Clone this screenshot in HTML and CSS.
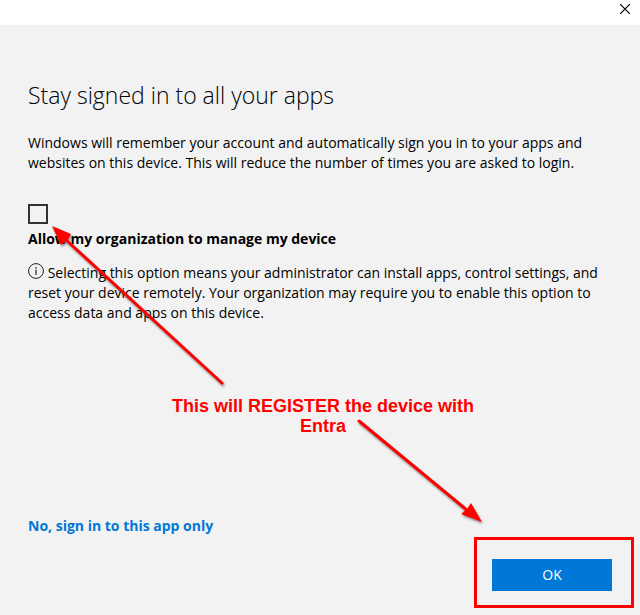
FILE: index.html
```html
<!DOCTYPE html>
<html lang="en">
<head>
    <meta charset="UTF-8">
    <meta name="viewport" content="width=device-width, initial-scale=1.0">
    <title>Stay signed in to all your apps</title>
    <link rel="stylesheet" href="styles.css">
</head>
<body>

<header class="titlebar">
    <button type="button" class="close" aria-label="Close">
        <svg width="10" height="10" viewBox="0 0 10 10">
            <path d="M0 0 L10 10 M10 0 L0 10" stroke="#000" stroke-width="1.2"/>
        </svg>
    </button>
</header>

<main class="dialog">
    <h1>Stay signed in to all your apps</h1>
    <p class="intro">Windows will remember your account and automatically sign you in to your apps and websites on this device. This will reduce the number of times you are asked to login.</p>

    <div class="option">
        <input type="checkbox" id="manage" name="manage">
        <label for="manage">Allow my organization to manage my device</label>
    </div>

    <p class="info">
        <svg class="info-icon" width="16" height="16" viewBox="0 0 16 16">
            <circle cx="8" cy="8" r="7.4" fill="none" stroke="#222" stroke-width="1"/>
            <path d="M8 4 V5.5 M8 6.5 V12" stroke="#222" stroke-width="1.2"/>
        </svg>
        Selecting this option means your administrator can install apps, control settings, and reset your device remotely. Your organization may require you to enable this option to access data and apps on this device.
    </p>

    <p class="note">This will REGISTER the device with Entra</p>

    <div class="actions">
        <a href="#" class="skip">No, sign in to this app only</a>
        <div class="highlight">
            <button type="button" class="ok">OK</button>
        </div>
    </div>
</main>

<!-- Arrows over the dialog -->
<svg class="arrows" width="640" height="615" viewBox="0 0 640 615">
    <g stroke="#f00" stroke-width="3" fill="#f00">
        <path d="M223 384 L64 238"/>
        <path d="M359 421 L468 511" stroke-linecap="round"/>
        <path d="M52 226 L71 234 L68 240 L61 245 Z" stroke="none"/>
        <path d="M482 522 L471 503 L467 509 L461 514 Z" stroke="none"/>
    </g>
</svg>

</body>
</html>
```

FILE: styles.css
```css
* {
    box-sizing: border-box;
}
body {
    display: flex;
    flex-direction: column;
    position: relative;
    min-height: 100vh;
    margin: 0;
    background-color: #f2f2f2;
    color: #000;
    font-family: "Segoe UI", "Open Sans", sans-serif;
    font-size: 14px;
    line-height: 20px;
}
.titlebar {
    display: flex;
    justify-content: flex-end;
    height: 25px;
    background-color: #fff;
}
.close {
    display: flex;
    align-items: flex-start;
    padding: 4px 10px;
    border: none;
    background: none;
}
.dialog {
    display: flex;
    flex: 1;
    flex-direction: column;
    padding: 54px 28px 24px;
}
h1 {
    margin: 0 0 22px;
    font-size: 23px;
    font-weight: 300;
    line-height: 32px;
}
.intro {
    margin: 0 0 31px;
}
.option {
    display: flex;
    flex-direction: column;
    align-items: flex-start;
    gap: 5px;
    margin-bottom: 14px;
}
.option input {
    width: 20px;
    height: 20px;
    margin: 0;
    border: 2px solid #333;
    appearance: none;
}
.option input:checked {
    background-color: #0078d7;
}
.option label {
    font-weight: 700;
}
.info {
    margin: 0;
}
.info-icon {
    vertical-align: -1px;
}
.note {
    max-width: 320px;
    margin: 73px auto 0;
    padding-left: 6px;
    color: #f00;
    font-family: "Liberation Sans", Arial, sans-serif;
    font-size: 18px;
    font-weight: 700;
    text-align: center;
}
.actions {
    display: flex;
    justify-content: space-between;
    margin-top: auto;
}
.skip {
    color: #0078d7;
    font-weight: 700;
    text-decoration: none;
}
.highlight {
    position: relative;
    margin-top: 43px;
}
.highlight::after {
    content: "";
    position: absolute;
    inset: -22px -22px -17px -18px;
    border: 3px solid #f00;
    pointer-events: none;
}
.ok {
    display: block;
    width: 120px;
    height: 32px;
    padding: 0;
    border: none;
    background-color: #0078d7;
    color: #fff;
    font: inherit;
}
.arrows {
    position: absolute;
    top: 0;
    left: 0;
    filter: drop-shadow(1px 2px 1px rgba(0, 0, 0, 0.4));
    pointer-events: none;
}
```
